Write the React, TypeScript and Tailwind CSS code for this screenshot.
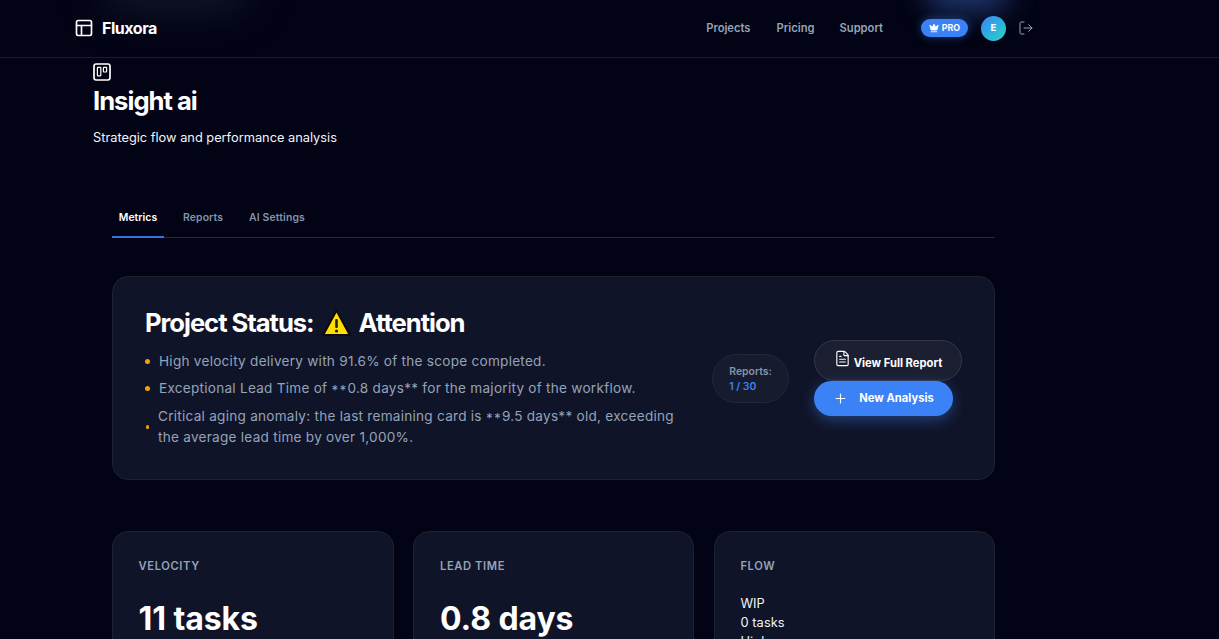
import { Crown, FileText, LogOut, PanelsTopLeft, Plus } from "lucide-react";

function Warning() {
  return (
    <svg width="29" height="28" viewBox="0 0 29 28" className="shrink-0">
      <path d="M14.5 1.5 L27.8 26 L1.2 26 Z" fill="#ffdf00" stroke="#0b0b0b" strokeWidth="2" strokeLinejoin="miter" />
      <rect x="13.2" y="10" width="2.6" height="9" rx="1" fill="#222" />
      <circle cx="14.5" cy="22" r="1.6" fill="#222" />
    </svg>
  );
}

function Boardmark() {
  return (
    <svg width="18" height="18" viewBox="0 0 18 18" fill="none" className="text-white">
      <rect x="1" y="1" width="16" height="16" rx="2.2" stroke="currentColor" strokeWidth="1.7" />
      <rect x="4.4" y="4.4" width="3.4" height="8.4" rx="0.5" stroke="currentColor" strokeWidth="1.2" />
      <rect x="10.4" y="4.4" width="3.2" height="4.6" rx="0.5" stroke="currentColor" strokeWidth="1.2" />
    </svg>
  );
}

function Stars() {
  return <span className="relative top-[2px] inline-block h-[14px] leading-[14px] tracking-[1.2px]">**</span>;
}

function Bullet({ children, small }: { children: React.ReactNode; small?: boolean }) {
  return (
    <div className={small ? "flex items-center gap-[9px] pl-[1px] text-[13.6px] leading-[21px] tracking-[0.25px] text-[#94a3b8]" : "flex items-center gap-[9px] text-[13.6px] leading-[21px] tracking-[0.25px] text-[#94a3b8]"}>
      <span className={small ? "h-[4px] w-[3px] shrink-0 rounded-full bg-[#f59e0b]" : "h-[5px] w-[5px] shrink-0 rounded-full bg-[#f59e0b]"} />
      <span>{children}</span>
    </div>
  );
}

function Card({ title, children }: { title: string; children: React.ReactNode }) {
  return (
    <div className="h-[200px] rounded-2xl border border-[#1e2233] bg-[#101428] px-[25.6px] pt-[26px]">
      <div className="text-[11.2px] font-semibold leading-[16px] tracking-[0.6px] text-[#94a3b8]">{title}</div>
      {children}
    </div>
  );
}

export default function App() {
  return (
    <div className="relative h-screen overflow-hidden bg-[#020314] font-['Inter',sans-serif] text-white">
      <div className="absolute left-[100px] top-[-30px] h-[40px] w-[150px] rounded-full bg-[#1a2036] opacity-70 blur-[20px]" />
      <div className="absolute left-[925px] top-[-28px] h-[40px] w-[85px] rounded-full bg-[#2a4a90] opacity-70 blur-[14px]" />

      <header className="relative flex h-[58px] items-center border-b border-[#1a1c2e] pb-[1px] pl-[74px] pr-[185px]">
        <PanelsTopLeft size={20} strokeWidth={2} className="text-white" />
        <span className="ml-[8px] text-[16px] font-bold tracking-[-0.45px]">Fluxora</span>
        <nav className="ml-auto mt-[1px] flex items-center text-[11.2px] font-semibold text-[#94a3b8]">
          <span>Projects</span>
          <span className="ml-[26px]">Pricing</span>
          <span className="ml-[25px]">Support</span>
        </nav>
        <span className="ml-[38px] flex h-[18px] w-[47px] items-center justify-center gap-[3px] rounded-full bg-[#3b82f6] text-[8.8px] font-bold shadow-[0_0_10px_rgba(59,130,246,0.45)]">
          <Crown size={10} fill="white" strokeWidth={2} />
          PRO
        </span>
        <span className="ml-[13px] flex h-[25px] w-[25px] items-center justify-center rounded-full bg-gradient-to-br from-[#3b82f6] to-[#2dd4bf] text-[9.6px] font-bold">E</span>
        <LogOut size={16} strokeWidth={1.5} className="ml-[12px] text-[#94a3b8]" />
      </header>

      <main className="relative">
        <div className="pl-[93px] pt-[5px]">
          <Boardmark />
          <h1 className="mt-[2px] text-[25.6px] font-bold leading-[36px] tracking-[-1px]">Insight ai</h1>
          <p className="mt-[9px] text-[12.8px] leading-[20px] text-[#f1f5f9]">Strategic flow and performance analysis</p>
        </div>

        <div className="mx-[112px] mt-[50px] w-[883px]">
          <div className="flex h-[40px] items-center border-b border-[#1f2a44] text-[10.4px] font-semibold tracking-[0.05px]">
            <span className="flex h-[40px] w-[52px] items-center justify-center border-b-2 border-[#3174e0] pt-[2px] text-white">Metrics</span>
            <span className="ml-[19px] tracking-[0.12px] text-[#8494ab]">Reports</span>
            <span className="ml-[26px] tracking-[0.15px] text-[#8494ab]">AI Settings</span>
          </div>

          <section className="mt-[38px] flex h-[204px] rounded-2xl border border-[#1e2233] bg-[#101428] px-[32px]">
            <div className="w-[567px] pt-[28px]">
              <h2 className="flex h-[36px] items-center text-[25.6px] font-bold tracking-[-1.03px]">
                <span>Project Status:</span>
                <span className="ml-[8px] flex"><Warning /></span>
                <span className="ml-[8px]">Attention</span>
              </h2>
              <div className="mt-[10px] w-[530px]">
                <div className="h-[27px]"><Bullet>High velocity delivery with 91.6% of the scope completed.</Bullet></div>
                <div className="h-[28px]"><Bullet>Exceptional Lead Time of <Stars />0.8 days** for the majority of the workflow.</Bullet></div>
                <div><Bullet small>Critical aging anomaly: the last remaining card is <Stars />9.5 days** old, exceeding the average lead time by over 1,000%.</Bullet></div>
              </div>
            </div>
            <div className="ml-[3px] mt-[77px] flex h-[49px] w-[77px] flex-col justify-center rounded-full border border-[#23273a] bg-[#171b2e] pl-[16px] text-[10.4px] font-semibold leading-[15px]">
              <span className="text-[#8494ab]">Reports:</span>
              <span className="text-[#3b82f6]">1 / 30</span>
            </div>
            <div className="ml-[25px] mt-[63px] flex flex-col items-start">
              <button className="flex h-[41px] w-[148px] items-center justify-center gap-[3px] rounded-full border border-[#33374a] bg-[#1b1f31] text-[11.2px] font-bold text-white">
                <FileText size={17} strokeWidth={1.6} className="mt-[-4px]" />
                <span className="mt-[5px]">View Full Report</span>
              </button>
              <button className="flex h-[35px] w-[139px] items-center justify-center gap-[11px] rounded-full bg-[#3b82f6] text-[11.2px] font-bold text-white shadow-[0_4px_14px_rgba(59,130,246,0.4)]">
                <Plus size={15} strokeWidth={1.8} />
                New Analysis
              </button>
            </div>
          </section>

          <div className="mt-[51px] grid grid-cols-[282px_281px_281px] gap-[19.4px]">
            <Card title="VELOCITY">
              <div className="mt-[23px] text-[32px] font-bold leading-[44px] tracking-[-0.1px]">11 tasks</div>
            </Card>
            <Card title="LEAD TIME">
              <div className="mt-[23px] text-[32px] font-bold leading-[44px] tracking-[-0.1px]">0.8 days</div>
            </Card>
            <Card title="FLOW">
              <div className="mt-[20px] text-[12.8px] leading-[19px] tracking-[0.1px] text-[#f1f5f9]">
                <div>WIP</div>
                <div>0 tasks</div>
                <div>High</div>
              </div>
            </Card>
          </div>
        </div>
      </main>
    </div>
  );
}
